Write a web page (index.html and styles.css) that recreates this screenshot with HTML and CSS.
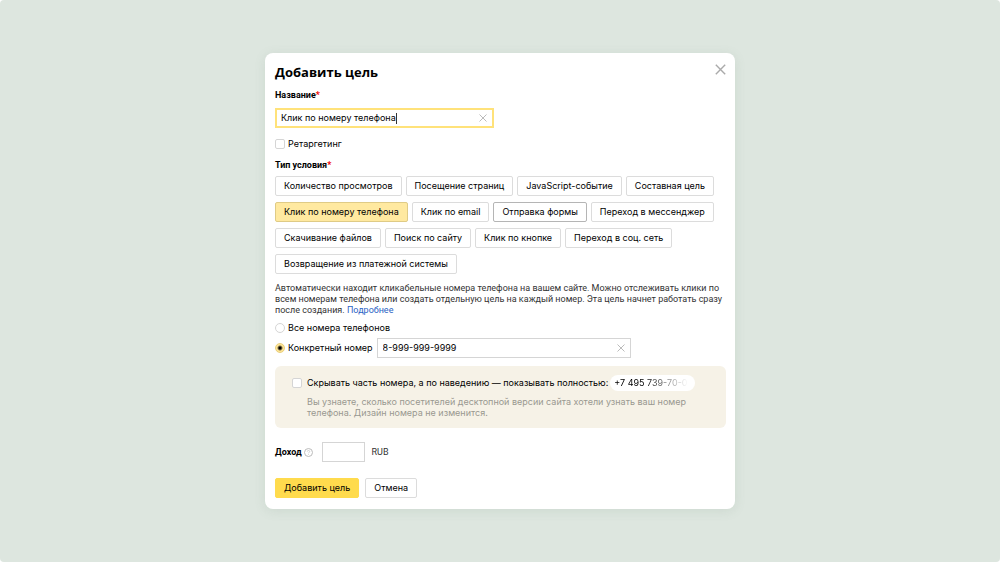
FILE: index.html
```html
<!DOCTYPE html>
<html lang="ru">
<head>
    <meta charset="UTF-8">
    <meta name="viewport" content="width=device-width, initial-scale=1.0">
    <title>Добавить цель</title>
    <link rel="stylesheet" href="styles.css">
</head>
<body>
    <div class="page">
        <form class="modal">
            <div class="modal-header">
                <h2>Добавить цель</h2>
                <button type="button" class="icon-button close" aria-label="Закрыть">
                    <svg width="11" height="11" viewBox="0 0 11 11"><path d="M.8 .8l9.4 9.4M10.2 .8l-9.4 9.4"/></svg>
                </button>
            </div>

            <label class="title" for="goalName">Название<span class="required">*</span></label>
            <div class="field field-name">
                <input type="text" id="goalName" name="goalName" value="Клик по номеру телефона">
                <span class="caret"></span>
                <button type="button" class="icon-button" aria-label="Очистить">
                    <svg width="8" height="8" viewBox="0 0 8 8"><path d="M.5 .5l7 7M7.5 .5l-7 7"/></svg>
                </button>
            </div>

            <label class="option retargeting"><input type="checkbox" name="retargeting">Ретаргетинг</label>

            <div class="title">Тип условия<span class="required">*</span></div>
            <div class="types">
                <button type="button" class="btn">Количество просмотров</button>
                <button type="button" class="btn">Посещение страниц</button>
                <button type="button" class="btn">JavaScript-событие</button>
                <button type="button" class="btn">Составная цель</button>
                <button type="button" class="btn selected">Клик по номеру телефона</button>
                <button type="button" class="btn">Клик по email</button>
                <button type="button" class="btn hovered">Отправка формы</button>
                <button type="button" class="btn">Переход в мессенджер</button>
                <button type="button" class="btn">Скачивание файлов</button>
                <button type="button" class="btn">Поиск по сайту</button>
                <button type="button" class="btn">Клик по кнопке</button>
                <button type="button" class="btn">Переход в соц. сеть</button>
                <button type="button" class="btn">Возвращение из платежной системы</button>
            </div>

            <p class="description">Автоматически находит кликабельные номера телефона на вашем сайте. Можно отслеживать клики по всем номерам телефона или создать отдельную цель на каждый номер. Эта цель начнет работать сразу после создания. <a href="#">Подробнее</a></p>

            <label class="option"><input type="radio" name="phones" value="all">Все номера телефонов</label>
            <div class="phone-row">
                <label class="option"><input type="radio" name="phones" value="one" checked>Конкретный номер</label>
                <div class="field field-phone">
                    <input type="text" name="phone" value="8-999-999-9999" aria-label="Номер телефона">
                    <button type="button" class="icon-button" aria-label="Очистить">
                        <svg width="8" height="8" viewBox="0 0 8 8"><path d="M.5 .5l7 7M7.5 .5l-7 7"/></svg>
                    </button>
                </div>
            </div>

            <div class="hide-box">
                <div class="hide-row">
                    <label class="option"><input type="checkbox" name="hideNumber">Скрывать часть номера, а по наведению — показывать полностью:</label>
                    <span class="pill"><span class="pill-text">+7 495 739-70-0</span></span>
                </div>
                <p class="hint">Вы узнаете, сколько посетителей десктопной версии сайта хотели узнать ваш номер телефона. Дизайн номера не изменится.</p>
            </div>

            <div class="income">
                <label class="title" for="income">Доход</label>
                <svg class="help" width="9" height="9" viewBox="0 0 9 9"><circle cx="4.5" cy="4.5" r="4"/><path d="M3.3 3.6c0-1.6 2.4-1.6 2.4 0 0 .8-1.2.8-1.2 1.7M4.5 6.2v.8"/></svg>
                <input type="text" id="income" name="income">
                <span class="currency">RUB</span>
            </div>

            <div class="actions">
                <button type="submit" class="btn primary">Добавить цель</button>
                <button type="button" class="btn">Отмена</button>
            </div>
        </form>
    </div>
</body>
</html>
```

FILE: styles.css
```css
* {
    box-sizing: border-box;
}
body {
    margin: 0;
    background: white;
    font-family: Inter, Arial, sans-serif;
    font-size: 9px;
    line-height: 12px;
    color: black;
}
.page {
    min-height: 100vh;
    display: flex;
    justify-content: center;
    align-items: center;
    background: #dde6df;
    border-radius: 4px;
}
.modal {
    width: 100%;
    max-width: 470px;
    padding: 10px 9px 11px 10px;
    background: white;
    border-radius: 8px;
    box-shadow: 0 2px 12px rgba(90, 120, 100, 0.12);
}
.modal-header {
    display: flex;
    justify-content: space-between;
    align-items: flex-start;
    margin-bottom: 8px;
}
h2 {
    margin: 0;
    font-family: "Open Sans", sans-serif;
    font-size: 13px;
    line-height: 18px;
}
.title {
    display: block;
    font-family: Roboto, sans-serif;
    font-weight: bold;
}
.required {
    color: #e00;
}
input {
    font: inherit;
    color: inherit;
}
.field {
    position: relative;
    display: flex;
    align-items: center;
    height: 20px;
    border: 1px solid #d5d5d5;
    background: white;
}
.field input {
    flex: 1;
    min-width: 0;
    padding: 0 5px;
    border: none;
    outline: none;
    background: none;
}
.field-name {
    width: 219px;
    margin: 7px 0 10px;
    border: 2px solid #ffe27a;
}
.field-name input {
    padding: 0 4px;
}
.caret {
    position: absolute;
    left: 119px;
    width: 1px;
    height: 11px;
    background: #333;
}
.field-phone {
    width: 254px;
}
.icon-button {
    display: flex;
    padding: 0 5px;
    border: none;
    background: none;
    cursor: pointer;
}
.icon-button path {
    stroke: #bbb;
    fill: none;
}
.close {
    padding: 1px 0;
}
.close path {
    stroke: #aaa;
    stroke-width: 1.4;
}
.option {
    display: flex;
    align-items: center;
    gap: 3px;
}
.option input {
    appearance: none;
    flex: none;
    width: 10px;
    height: 10px;
    margin: 0;
    border: 1px solid #d5d5d5;
    border-radius: 2px;
    background: white;
}
.option input[type="radio"] {
    border-radius: 50%;
}
.option input[type="radio"]:checked {
    border-color: #e8cf7d;
    background: radial-gradient(circle, black 1px, #ffe595 3px);
}
.retargeting {
    margin-bottom: 9px;
}
.types {
    display: flex;
    flex-wrap: wrap;
    gap: 6px 4px;
    margin-top: 5px;
}
.btn {
    height: 20px;
    padding: 0 8px;
    border: 1px solid #dcdcdc;
    border-radius: 2px;
    background: white;
    color: black;
    font: inherit;
    white-space: nowrap;
    cursor: pointer;
}
.btn.selected {
    border-color: #dfcb86;
    background: #ffe9a0;
}
.btn.hovered {
    border-color: #b5b5b5;
}
.btn.primary {
    border-color: #ffdb4d;
    background: #ffdb4d;
}
.description {
    margin: 9px 0 6px;
    font-family: Roboto, sans-serif;
    line-height: 11px;
    color: #333;
}
.description a {
    color: #2a62c4;
    text-decoration: none;
}
.phone-row {
    display: flex;
    align-items: center;
    gap: 4px;
    margin: 4px 0 8px;
}
.hide-box {
    padding: 9px 17px 10px;
    border-radius: 6px;
    background: #f6f2e7;
}
.hide-row {
    display: flex;
    align-items: center;
    gap: 2px;
}
.hide-row .option {
    gap: 5px;
}
.pill {
    padding: 2px 7px 2px 4px;
    border-radius: 8px;
    background: white;
    white-space: nowrap;
}
.pill-text {
    background: linear-gradient(to right, black 40%, white 100%);
    background-clip: text;
    color: transparent;
}
.hint {
    margin: 5px 0 0 15px;
    line-height: 11px;
    color: #999890;
}
.income {
    display: flex;
    align-items: center;
    margin: 14px 0 16px;
}
.income input {
    width: 43px;
    height: 20px;
    margin: 0 7px 0 9px;
    border: 1px solid #d5d5d5;
}
.help {
    margin-left: 2px;
    fill: none;
    stroke: #bbb;
}
.help path {
    stroke-width: 0.7;
}
.currency {
    font-family: Roboto, sans-serif;
    color: #333;
}
.actions {
    display: flex;
    gap: 6px;
}
```
